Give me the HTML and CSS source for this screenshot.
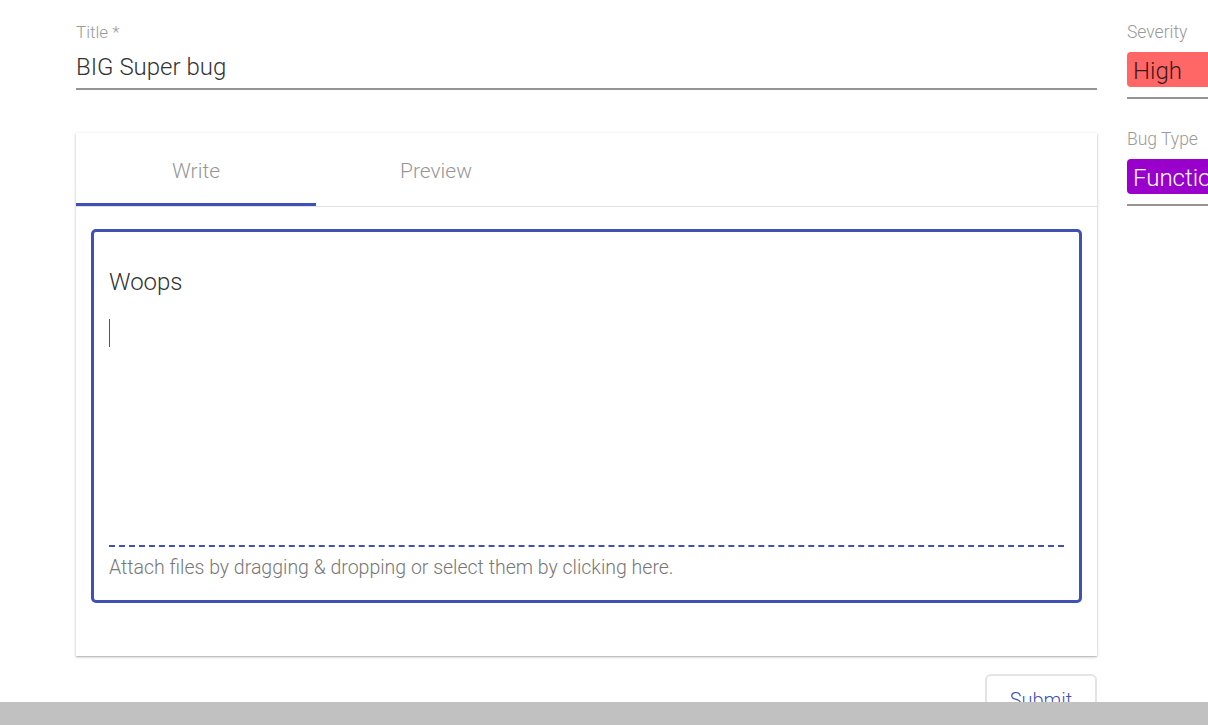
FILE: index.html
```html
<!DOCTYPE html>
<html>
<head>
<meta charset="utf-8">
<link rel="stylesheet" href="styles.css">
</head>
<body>
<div class="page">
  <div class="main">
    <div class="field">
      <div class="label">Title *</div>
      <div class="input">BIG Super bug</div>
    </div>
    <div class="card">
      <div class="tabs">
        <div class="tab active">Write</div>
        <div class="tab">Preview</div>
      </div>
      <div class="editor-wrap">
        <div class="editor">
          <div class="text">Woops</div>
          <div class="caret"></div>
          <div class="spacer"></div>
          <div class="attach">Attach files by dragging &amp; dropping or select them by clicking here.</div>
        </div>
      </div>
    </div>
    <div class="actions">
      <button class="submit">Submit</button>
    </div>
  </div>
  <div class="side">
    <div class="sfield">
      <div class="label">Severity</div>
      <div class="select"><span class="chip high">High</span></div>
    </div>
    <div class="sfield">
      <div class="label">Bug Type</div>
      <div class="select"><span class="chip func">Functional</span></div>
    </div>
  </div>
</div>
<div class="scrollbar"></div>
</body>
</html>
```

FILE: styles.css
```css
html, body {
  margin: 0;
  padding: 0;
  background: #fff;
  overflow: hidden;
  height: 725px;
}
body {
  font-family: Roboto, "Noto Sans", sans-serif;
  font-weight: 300;
  color: #333;
}
.page {
  display: flex;
  gap: 30px;
  padding: 20px 0 0 76px;
  width: 1132px;
  overflow: hidden;
}
.main {
  width: 1021px;
  flex: none;
}
.label {
  font-size: 17px;
  color: #9a9a9a;
  line-height: 24px;
}
.field .input {
  font-size: 24px;
  line-height: 32px;
  color: #333;
  padding: 7px 0 5px;
  border-bottom: 2px solid #949494;
}
.card {
  margin-top: 43px;
  background: #fff;
  box-shadow: 0 1px 3px rgba(0,0,0,0.22), 0 1px 1px rgba(0,0,0,0.12);
  height: 523px;
  display: flex;
  flex-direction: column;
}
.tabs {
  display: flex;
  height: 73px;
  border-bottom: 1px solid #e0e0e0;
}
.tab {
  width: 240px;
  display: flex;
  align-items: center;
  justify-content: center;
  font-size: 21px;
  color: #979797;
  padding-top: 2px;
  box-sizing: border-box;
}
.tab.active {
  border-bottom: 3px solid #3f51b5;
  padding-top: 5px;
}
.editor-wrap {
  padding: 22px 15px 0 15px;
}
.editor {
  height: 374px;
  box-sizing: border-box;
  border: 3px solid #3f51b5;
  border-radius: 5px;
  padding: 35px 15px 20px 15px;
  display: flex;
  flex-direction: column;
}
.text {
  font-size: 24px;
  line-height: 30px;
  color: #333;
}
.caret {
  width: 1px;
  height: 28px;
  background: #3f51b5;
  margin-top: 22px;
}
.spacer { flex: 1; }
.attach {
  border-top: 2px dashed #3f51b5;
  padding-top: 9px;
  font-size: 19.5px;
  line-height: 24px;
  color: #777;
}
.actions {
  display: flex;
  justify-content: flex-end;
  padding-top: 18px;
}
.submit {
  width: 112px;
  height: 40px;
  background: #fff;
  border: 2px solid #e4e4e4;
  border-radius: 6px;
  font-family: Roboto, sans-serif;
  font-weight: 300;
  font-size: 20px;
  color: #3f51b5;
  padding: 12px 0 0;
  margin-right: 0;
}
.side {
  width: 81px;
  flex: none;
  overflow: hidden;
}
.sfield {
  margin-bottom: 28px;
}
.sfield .label {
  font-size: 17.5px;
  white-space: nowrap;
}
.select {
  margin-top: 8px;
  padding-bottom: 10px;
  border-bottom: 2px solid #949494;
  height: 35px;
  width: 200px;
}
.chip {
  display: block;
  height: 35px;
  box-sizing: border-box;
  line-height: 35px;
  padding: 2px 0 0 6px;
  border-radius: 4px;
  font-size: 24px;
  white-space: nowrap;
  overflow: hidden;
}
.chip.high {
  background: #ff6666;
  color: #3a1a1a;
}
.chip.func {
  background: #9900cc;
  color: #fff;
}
.scrollbar {
  position: fixed;
  left: 0;
  right: 0;
  bottom: 0;
  height: 23px;
  background: #c1c1c1;
}
```
